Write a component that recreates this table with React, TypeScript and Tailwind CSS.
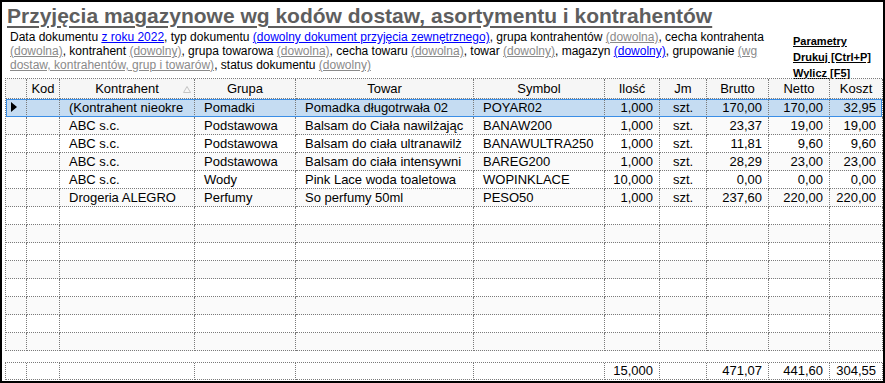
import React from 'react';

type Row = {
  kod: string;
  kontrahent: string;
  grupa: string;
  towar: string;
  symbol: string;
  ilosc: string;
  jm: string;
  brutto: string;
  netto: string;
  koszt: string;
};

// names are cut the way the grid cuts them
const rows: Row[] = [
  { kod: '', kontrahent: '(Kontrahent nieokre', grupa: 'Pomadki', towar: 'Pomadka długotrwała 02', symbol: 'POYAR02', ilosc: '1,000', jm: 'szt.', brutto: '170,00', netto: '170,00', koszt: '32,95' },
  { kod: '', kontrahent: 'ABC s.c.', grupa: 'Podstawowa', towar: 'Balsam do Ciała nawilżając', symbol: 'BANAW200', ilosc: '1,000', jm: 'szt.', brutto: '23,37', netto: '19,00', koszt: '19,00' },
  { kod: '', kontrahent: 'ABC s.c.', grupa: 'Podstawowa', towar: 'Balsam do ciała ultranawilż', symbol: 'BANAWULTRA250', ilosc: '1,000', jm: 'szt.', brutto: '11,81', netto: '9,60', koszt: '9,60' },
  { kod: '', kontrahent: 'ABC s.c.', grupa: 'Podstawowa', towar: 'Balsam do ciała intensywni', symbol: 'BAREG200', ilosc: '1,000', jm: 'szt.', brutto: '28,29', netto: '23,00', koszt: '23,00' },
  { kod: '', kontrahent: 'ABC s.c.', grupa: 'Wody', towar: 'Pink Lace woda toaletowa', symbol: 'WOPINKLACE', ilosc: '10,000', jm: 'szt.', brutto: '0,00', netto: '0,00', koszt: '0,00' },
  { kod: '', kontrahent: 'Drogeria ALEGRO', grupa: 'Perfumy', towar: 'So perfumy 50ml', symbol: 'PESO50', ilosc: '1,000', jm: 'szt.', brutto: '237,60', netto: '220,00', koszt: '220,00' },
];

const EMPTY_ROWS = 8;

const grid = 'grid grid-cols-[21px_33px_135px_101px_178px_131px_55px_47px_62px_61px_53px]';
const cell = 'border-r border-b border-dotted border-[#7a7a7a] overflow-hidden whitespace-nowrap';
const txt = `${cell} pl-[9px]`;
const num = `${cell} text-right pr-[6px]`;
const mid = `${cell} text-center`;

const Gray: React.FC<{ children: React.ReactNode }> = ({ children }) => (
  <span className="text-[#8a8a8a] underline">{children}</span>
);
const Blue: React.FC<{ children: React.ReactNode }> = ({ children }) => (
  <span className="text-[#0000ff] underline">{children}</span>
);

const Pointer = () => (
  <svg width="6" height="10" viewBox="0 0 6 10" className="ml-[5px] mt-[3px]">
    <polygon points="0,0 6,5 0,10" fill="#000" />
  </svg>
);

const SortArrow = () => (
  <svg width="8" height="7" viewBox="0 0 8 7" className="absolute right-[3px] top-[7px]">
    <polygon points="4,0.5 7.5,6.5 0.5,6.5" fill="none" stroke="#c4c4c4" strokeWidth="1" />
  </svg>
);

export default function App() {
  return (
    <div
      className="w-[885px] h-[383px] border-2 border-black bg-white overflow-hidden flex flex-col text-black"
      style={{ fontFamily: '"Liberation Sans", Arial, sans-serif' }}
    >
      <div className="flex">
        <div className="flex-1 pl-[5px] pt-[2px]">
          <h1 className="text-[21px] leading-[24px] font-bold text-[#5e5e5e] underline decoration-2 underline-offset-[3px] whitespace-nowrap">
            Przyjęcia magazynowe wg kodów dostaw, asortymentu i kontrahentów
          </h1>
          <div className="mt-[2px] pl-[3px] text-[12px] leading-[14px] whitespace-nowrap">
            <div>
              Data dokumentu <Blue>z roku 2022</Blue>, typ dokumentu{' '}
              <Blue>(dowolny dokument przyjęcia zewnętrznego)</Blue>, grupa kontrahentów{' '}
              <Gray>(dowolna)</Gray>, cecha kontrahenta
            </div>
            <div>
              <Gray>(dowolna)</Gray>, kontrahent <Gray>(dowolny)</Gray>, grupa towarowa{' '}
              <Gray>(dowolna)</Gray>, cecha towaru <Gray>(dowolna)</Gray>, towar{' '}
              <Gray>(dowolny)</Gray>, magazyn <Blue>(dowolny)</Blue>, grupowanie <Gray>(wg</Gray>
            </div>
            <div>
              <Gray>dostaw, kontrahentów, grup i towarów)</Gray>, status dokumentu{' '}
              <Gray>(dowolny)</Gray>
            </div>
          </div>
        </div>
        <div className="w-[90px] h-[70px] pt-[33px] flex flex-col gap-[3px] text-[11px] leading-[13px] font-bold underline whitespace-nowrap">
          <span>Parametry</span>
          <span>Drukuj [Ctrl+P]</span>
          <span>Wylicz [F5]</span>
        </div>
      </div>

      <div className="ml-[3px] mt-[6px] w-[877px] text-[13px] leading-[17px]">
        <div className="border-l border-t border-dotted border-[#7a7a7a]">
          <div className={`${grid} h-[20px] bg-[#f6f6f6] leading-[19px]`}>
            <div className={cell} />
            <div className={mid}>Kod</div>
            <div className={`${mid} relative`}>
              Kontrahent
              <SortArrow />
            </div>
            <div className={mid}>Grupa</div>
            <div className={mid}>Towar</div>
            <div className={mid}>Symbol</div>
            <div className={mid}>Ilość</div>
            <div className={mid}>Jm</div>
            <div className={mid}>Brutto</div>
            <div className={mid}>Netto</div>
            <div className={mid}>Koszt</div>
          </div>

          {rows.map((r, i) => {
            const selected = i === 0;
            const bg = selected
              ? 'bg-[#c5dcf2] outline outline-1 -outline-offset-1 outline-[#3a8ee6] relative z-10'
              : i % 2
                ? 'bg-[#fafafa]'
                : 'bg-white';
            return (
              <div key={i} className={`${grid} h-[18px] ${bg}`}>
                <div className={cell}>{selected && <Pointer />}</div>
                <div className={txt}>{r.kod}</div>
                <div className={txt}>{r.kontrahent}</div>
                <div className={txt}>{r.grupa}</div>
                <div className={txt}>{r.towar}</div>
                <div className={txt}>{r.symbol}</div>
                <div className={num}>{r.ilosc}</div>
                <div className={mid}>{r.jm}</div>
                <div className={num}>{r.brutto}</div>
                <div className={num}>{r.netto}</div>
                <div className={num}>{r.koszt}</div>
              </div>
            );
          })}

          {Array.from({ length: EMPTY_ROWS }).map((_, j) => {
            const i = rows.length + j;
            return (
              <div key={`e${j}`} className={`${grid} h-[18px] ${i % 2 ? 'bg-[#fafafa]' : 'bg-white'}`}>
                {Array.from({ length: 11 }).map((__, k) => (
                  <div key={k} className={cell} />
                ))}
              </div>
            );
          })}
        </div>

        <div className="mt-[11px] border-l border-t border-dotted border-[#7a7a7a]">
          <div className={`${grid} h-[17px] leading-[16px]`}>
            <div className={cell} />
            <div className={cell} />
            <div className={cell} />
            <div className={cell} />
            <div className={cell} />
            <div className={cell} />
            <div className={num}>15,000</div>
            <div className={cell} />
            <div className={num}>471,07</div>
            <div className={num}>441,60</div>
            <div className={num}>304,55</div>
          </div>
        </div>
      </div>
    </div>
  );
}
